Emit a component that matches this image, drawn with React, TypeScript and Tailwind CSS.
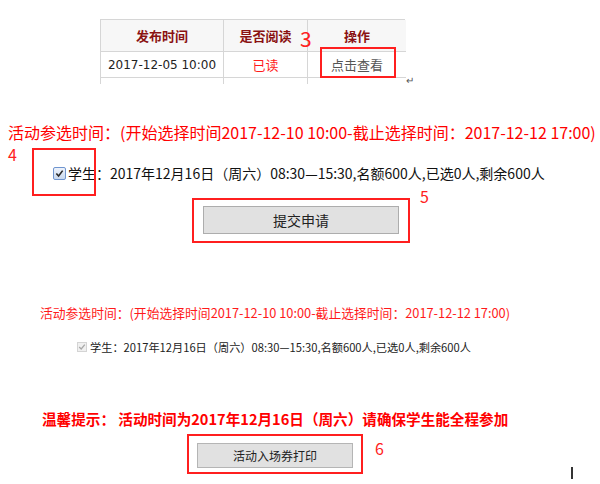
import React from "react";

function CheckBox({ disabled }: { disabled?: boolean }) {
  if (disabled) {
    return (
      <span className="inline-flex h-[10px] w-[10px] items-center justify-center border border-[#d4d4d4] bg-[#f0f0f0]">
        <svg viewBox="0 0 10 10" className="h-[8px] w-[8px]">
          <path d="M1.5 5 L4 7.5 L8.5 2" fill="none" stroke="#a8a8a8" strokeWidth="1.6" />
        </svg>
      </span>
    );
  }
  return (
    <span className="inline-flex h-[13px] w-[13px] items-center justify-center rounded-[2px] border border-[#6f95cf] bg-gradient-to-b from-[#eef3fb] to-[#c9d8ee]">
      <svg viewBox="0 0 10 10" className="h-[9px] w-[9px]">
        <path d="M1.5 5 L4 7.8 L8.5 1.8" fill="none" stroke="#2a2a2a" strokeWidth="1.8" />
      </svg>
    </span>
  );
}

export default function App() {
  const font = { fontFamily: '"Noto Sans CJK SC", "Noto Sans", sans-serif' };
  return (
    <div className="relative h-[484px] w-[600px] overflow-hidden bg-white text-[#222]" style={font}>
      {/* Table */}
      <div className="relative ml-[100px] mt-[19px] w-[305px]">
        <div className="grid grid-cols-[123px_84px_98px] border-t border-l border-[#d6d6d6]">
          <div className="flex h-[32px] items-center justify-center border-r border-b border-[#d6d6d6] bg-[#f7f7f7] text-[13px] font-bold text-[#8a1212]">发布时间</div>
          <div className="flex h-[32px] items-center justify-center border-r border-b border-[#d6d6d6] bg-[#f7f7f7] text-[13px] font-bold text-[#8a1212]">是否阅读</div>
          <div className="flex h-[32px] items-center justify-center border-b border-[#d6d6d6] bg-[#f7f7f7] text-[13px] font-bold text-[#8a1212]">操作</div>
          <div className="flex h-[26px] items-center justify-center border-r border-b border-[#d6d6d6] text-[12px] text-[#222]" style={{ fontFamily: '"DejaVu Sans", sans-serif' }}>2017-12-05 10:00</div>
          <div className="flex h-[26px] items-center justify-center border-r border-b border-[#d6d6d6] text-[13px] text-[#ff1a1a]">已读</div>
          <div className="flex h-[26px] items-center justify-center border-b border-[#d6d6d6] text-[13px] text-[#555]">点击查看</div>
          <div className="h-[6px] border-r border-[#d6d6d6]"></div>
          <div className="h-[6px] border-r border-[#d6d6d6]"></div>
          <div className="h-[6px]"></div>
        </div>
        <span className="absolute left-[200px] top-[9px] text-[21px] leading-none text-[#ff2020]">3</span>
        <div className="absolute left-[220px] top-[28px] h-[31px] w-[76px] border-2 border-[#ff1f1f]"></div>
        <span className="absolute left-[306px] top-[56px] text-[10px] leading-none text-[#555]">↵</span>
      </div>

      {/* Section 1 */}
      <div className="mt-[39px] pl-[8px] text-[16px] leading-[19px] text-[#ff0000] whitespace-nowrap">
        活动参选时间：(开始选择时间2017-12-10 10:00-截止选择时间：2017-12-12 17:00)
      </div>
      <div className="relative h-[56px]">
        <span className="absolute left-[8px] top-[4px] text-[16px] leading-none text-[#ff2020]">4</span>
        <div className="absolute left-[32px] top-[6px] h-[48px] w-[64px] border-2 border-[#ff1f1f]"></div>
        <div className="flex items-center gap-[2px] pl-[53px] pt-[23px] text-[14px] leading-[16px] text-[#111] whitespace-nowrap">
          <CheckBox />
          <span>学生：2017年12月16日（周六）08:30—15:30,名额600人,已选0人,剩余600人</span>
        </div>
        <span className="absolute left-[420px] top-[46px] text-[16px] leading-none text-[#ff2020]">5</span>
      </div>
      <div className="ml-[192px] w-[218px] border-2 border-[#ff1f1f] px-[9px] pt-[6px] pb-[7px]">
        <div className="flex h-[28px] items-center justify-center border border-[#adadad] bg-[#e1e1e1] text-[14px] text-[#222]">提交申请</div>
      </div>

      {/* Section 2 */}
      <div className="mt-[62px] text-center pr-[50px] text-[12.8px] leading-[16px] text-[#ff1a1a] whitespace-nowrap">
        活动参选时间：(开始选择时间2017-12-10 10:00-截止选择时间：2017-12-12 17:00)
      </div>
      <div className="mt-[19px] flex items-center gap-[3px] pl-[77px] text-[11.2px] leading-[14px] text-[#222] whitespace-nowrap">
        <CheckBox disabled />
        <span>学生：2017年12月16日（周六）08:30—15:30,名额600人,已选0人,剩余600人</span>
      </div>

      {/* Section 3 */}
      <div className="mt-[57px] pl-[42px] text-[14.6px] leading-[16px] font-bold text-[#ff0000] whitespace-nowrap">
        温馨提示：&nbsp;活动时间为2017年12月16日（周六）请确保学生能全程参加
      </div>
      <div className="relative mt-[7px] h-[42px]">
        <div className="ml-[187px] w-[176px] border-2 border-[#ff1f1f] px-[8px] pt-[7px] pb-[4px]">
          <div className="flex h-[25px] items-center justify-center border border-[#b5b5b5] bg-[#e1e1e1] text-[12px] text-[#222]">活动入场券打印</div>
        </div>
        <span className="absolute left-[375px] top-[6px] text-[16px] leading-none text-[#ff2020]">6</span>
        <span className="absolute left-[571px] top-[33px] h-[12px] w-[2px] bg-[#333]"></span>
      </div>
    </div>
  );
}
